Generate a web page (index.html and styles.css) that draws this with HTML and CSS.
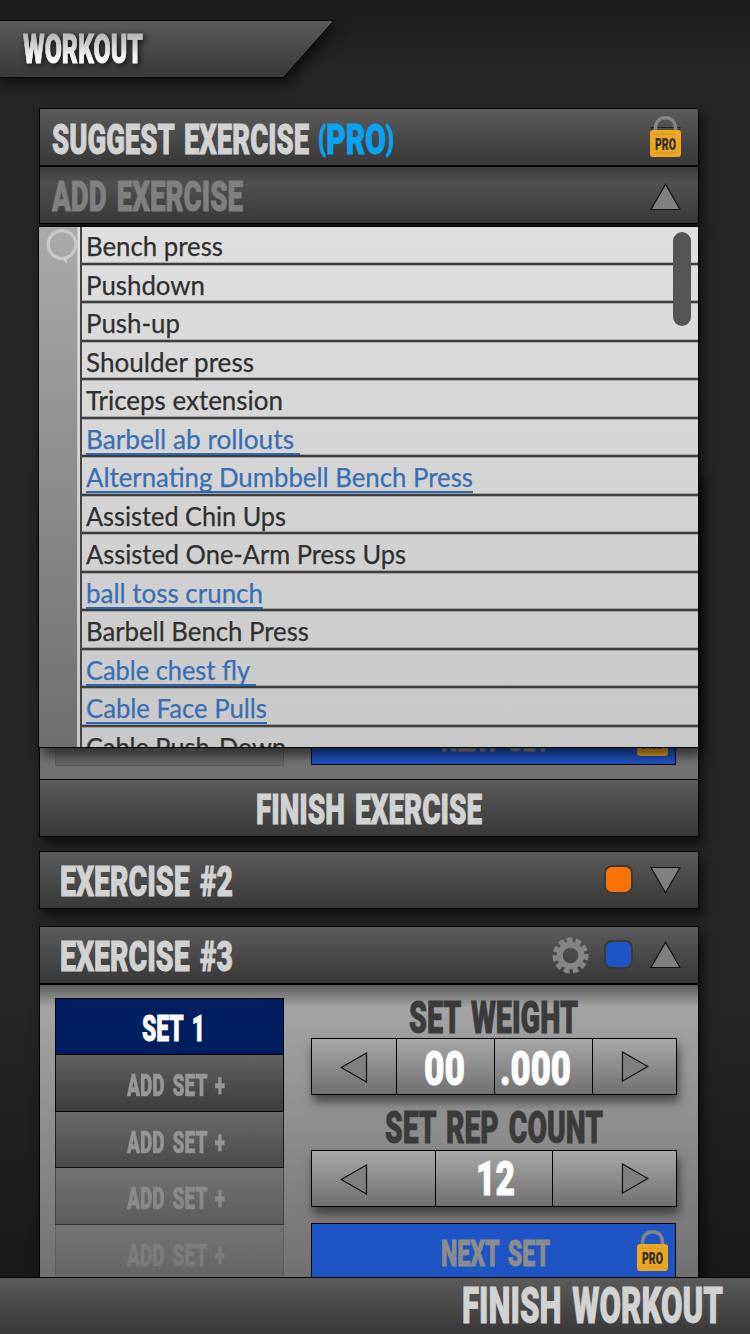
FILE: index.html
```html
<!DOCTYPE html>
<html lang="en">
<head>
<meta charset="utf-8">
<title>Workout</title>
<link rel="stylesheet" href="styles.css">
</head>
<body>
<svg class="defs" width="0" height="0" aria-hidden="true">
  <defs>
    <linearGradient id="barFill" x1="0" y1="0" x2="0" y2="1"><stop offset="0" stop-color="#5b5b5b"/><stop offset="1" stop-color="#383838"/></linearGradient>
    <linearGradient id="titleFill" x1="0" y1="0" x2="0" y2="1"><stop offset="0.2" stop-color="#b8b8b8"/><stop offset="0.75" stop-color="#ffffff"/></linearGradient>
    <symbol id="up" viewBox="0 0 31 28"><path d="M15.5 1.2 30 26.5H1Z"/></symbol>
    <symbol id="down" viewBox="0 0 31 28"><path d="M15.5 26.8 30 1.5H1Z"/></symbol>
    <symbol id="left" viewBox="0 0 28 31"><path d="M1.2 15.5 26.5 1V30Z"/></symbol>
    <symbol id="right" viewBox="0 0 28 31"><path d="M26.8 15.5 1.5 1V30Z"/></symbol>
    <symbol id="lock" viewBox="0 0 31 41">
      <path d="M5.5 15V12C5.5 5.5 10 1.8 15.5 1.8S25.500 5.500 25.500 12V15" fill="none" stroke="#858585" stroke-width="3.4"/>
      <rect y="14" width="31" height="27" rx="3" fill="#eca620"/>
      <path d="M4 18.300H27M4 36.800H27" stroke="#cf9a36" stroke-width="1"/>
    </symbol>
  </defs>
</svg>
<div class="screen">
  <header class="tab">
    <svg class="tab-shape" width="336" height="58"><path d="M-2 .5H334L283.500 57.500H-2Z" fill="url(#barFill)" stroke="#000"/></svg>
    <h1><svg class="cap title" width="120" height="29"><text y="29" textLength="120" lengthAdjust="spacingAndGlyphs">WORKOUT</text></svg></h1>
  </header>

  <main>
    <section class="picker">
      <div class="bar suggest">
        <svg class="cap" width="258" height="31"><text y="31" textLength="257" lengthAdjust="spacingAndGlyphs">SUGGEST EXERCISE</text></svg>
        <svg class="cap pro" width="77" height="31"><text y="31" textLength="76" lengthAdjust="spacingAndGlyphs"><tspan class="paren" dy="-4.500">(</tspan><tspan dy="4.500">PRO</tspan><tspan class="paren" dy="-4.500">)</tspan></text></svg>
        <svg class="end lock-icon" width="31" height="41"><path d="M.5 11.500H30.500M1 12 4 17M30 12 27 17" stroke="#222" fill="none"/><use href="#lock"/><text x="5" y="33.600" textLength="21" lengthAdjust="spacingAndGlyphs">PRO</text></svg>
      </div>
      <div class="bar add">
        <svg class="cap" width="192" height="31"><text y="31" textLength="191" lengthAdjust="spacingAndGlyphs">ADD EXERCISE</text></svg>
        <svg class="end tri tri-low" width="31" height="28"><use href="#up"/></svg>
      </div>
      <div class="dropdown">
        <div class="gutter"><svg width="34" height="36"><path d="M15 1.700A13.800 13.800 0 1 1 15 29.300A13.800 13.800 0 1 1 15 1.700Z" fill="none" stroke="#c9c9c9" stroke-width="3.200"/><path d="M14.500 29 20 35V28Z" fill="#c9c9c9"/></svg></div>
        <ul>
          <li><svg class="row-text" width="137" height="28"><text y="28" textLength="137" lengthAdjust="spacingAndGlyphs">Bench press</text></svg></li>
          <li><svg class="row-text" width="119" height="28"><text y="28" textLength="119" lengthAdjust="spacingAndGlyphs">Pushdown</text></svg></li>
          <li><svg class="row-text" width="94" height="28"><text y="28" textLength="94" lengthAdjust="spacingAndGlyphs">Push-up</text></svg></li>
          <li><svg class="row-text" width="168" height="28"><text y="28" textLength="168" lengthAdjust="spacingAndGlyphs">Shoulder press</text></svg></li>
          <li><svg class="row-text" width="197" height="28"><text y="28" textLength="197" lengthAdjust="spacingAndGlyphs">Triceps extension</text></svg></li>
          <li><a class="trail"><svg class="row-text" width="208" height="28"><text y="28" textLength="208" lengthAdjust="spacingAndGlyphs">Barbell ab rollouts</text></svg></a></li>
          <li><a><svg class="row-text" width="387" height="28"><text y="28" textLength="387" lengthAdjust="spacingAndGlyphs">Alternating Dumbbell Bench Press</text></svg></a></li>
          <li><svg class="row-text" width="200" height="28"><text y="28" textLength="200" lengthAdjust="spacingAndGlyphs">Assisted Chin Ups</text></svg></li>
          <li><svg class="row-text" width="320" height="28"><text y="28" textLength="320" lengthAdjust="spacingAndGlyphs">Assisted One-Arm Press Ups</text></svg></li>
          <li><a><svg class="row-text" width="177" height="28"><text y="28" textLength="177" lengthAdjust="spacingAndGlyphs">ball toss crunch</text></svg></a></li>
          <li><svg class="row-text" width="223" height="28"><text y="28" textLength="223" lengthAdjust="spacingAndGlyphs">Barbell Bench Press</text></svg></li>
          <li><a class="trail"><svg class="row-text" width="164" height="28"><text y="28" textLength="164" lengthAdjust="spacingAndGlyphs">Cable chest fly</text></svg></a></li>
          <li><a><svg class="row-text" width="181" height="28"><text y="28" textLength="181" lengthAdjust="spacingAndGlyphs">Cable Face Pulls</text></svg></a></li>
          <li><svg class="row-text" width="200" height="28"><text y="28" textLength="200" lengthAdjust="spacingAndGlyphs">Cable Push-Down</text></svg></li>
        </ul>
        <div class="scrollbar"></div>
      </div>
    </section>

    <section class="card first">
      <div class="body">
        <div class="sets"><div class="set f4"><svg class="cap s22" width="98" height="22"><text y="22" textLength="98" lengthAdjust="spacingAndGlyphs">ADD SET +</text></svg></div></div>
        <div class="controls">
          <div class="next">
            <svg class="cap s27" width="110" height="27"><text y="27" textLength="109" lengthAdjust="spacingAndGlyphs">NEXT SET</text></svg>
            <svg class="lock-icon" width="31" height="41"><use href="#lock"/><text x="5" y="33.600" textLength="21" lengthAdjust="spacingAndGlyphs">PRO</text></svg>
          </div>
        </div>
      </div>
      <div class="bar finish"><svg class="cap" width="227" height="31"><text y="31" textLength="226" lengthAdjust="spacingAndGlyphs">FINISH EXERCISE</text></svg></div>
    </section>

    <section class="card second">
      <div class="bar named">
        <svg class="cap" width="174" height="31"><text y="31" textLength="173" lengthAdjust="spacingAndGlyphs">EXERCISE #2</text></svg>
        <i class="end swatch orange"></i>
        <svg class="tri" width="31" height="28"><use href="#down"/></svg>
      </div>
    </section>

    <section class="card third">
      <div class="bar named">
        <svg class="cap" width="174" height="31"><text y="31" textLength="173" lengthAdjust="spacingAndGlyphs">EXERCISE #3</text></svg>
        <svg class="end gear" width="37" height="37" viewBox="-18.500 -18.500 37 37"><g fill="none" stroke="#858585" transform="rotate(-104)"><circle r="10.800" stroke-width="6"/><circle r="15.400" stroke-width="5.200" stroke-dasharray="5.700 3.097"/></g></svg>
        <i class="swatch blue"></i>
        <svg class="tri" width="31" height="28"><use href="#up"/></svg>
      </div>
      <div class="body">
        <div class="sets">
          <div class="set current"><svg class="cap s27" width="63" height="27"><text y="27" textLength="63" lengthAdjust="spacingAndGlyphs">SET 1</text></svg></div>
          <div class="set f1"><svg class="cap s22" width="98" height="22"><text y="22" textLength="98" lengthAdjust="spacingAndGlyphs">ADD SET +</text></svg></div>
          <div class="set f2"><svg class="cap s22" width="98" height="22"><text y="22" textLength="98" lengthAdjust="spacingAndGlyphs">ADD SET +</text></svg></div>
          <div class="set f3"><svg class="cap s22" width="98" height="22"><text y="22" textLength="98" lengthAdjust="spacingAndGlyphs">ADD SET +</text></svg></div>
          <div class="set f4"><svg class="cap s22" width="98" height="22"><text y="22" textLength="98" lengthAdjust="spacingAndGlyphs">ADD SET +</text></svg></div>
        </div>
        <div class="controls">
          <svg class="cap label" width="170" height="33"><text y="33" textLength="169" lengthAdjust="spacingAndGlyphs">SET WEIGHT</text></svg>
          <div class="stepper weight">
            <span><svg class="tri" width="28" height="31"><use href="#left"/></svg></span>
            <span><svg class="cap num" width="41" height="35"><text y="35" textLength="41" lengthAdjust="spacingAndGlyphs">00</text></svg></span>
            <span><svg class="cap num" width="71" height="35"><text y="35" textLength="71" lengthAdjust="spacingAndGlyphs">.000</text></svg></span>
            <span><svg class="tri" width="28" height="31"><use href="#right"/></svg></span>
          </div>
          <svg class="cap label" width="219" height="33"><text y="33" textLength="218" lengthAdjust="spacingAndGlyphs">SET REP COUNT</text></svg>
          <div class="stepper reps">
            <span><svg class="tri" width="28" height="31"><use href="#left"/></svg></span>
            <span><svg class="cap num" width="39" height="35"><text y="35" textLength="39" lengthAdjust="spacingAndGlyphs">12</text></svg></span>
            <span><svg class="tri" width="28" height="31"><use href="#right"/></svg></span>
          </div>
          <div class="next">
            <svg class="cap s27" width="110" height="27"><text y="27" textLength="109" lengthAdjust="spacingAndGlyphs">NEXT SET</text></svg>
            <svg class="lock-icon" width="31" height="41"><use href="#lock"/><text x="5" y="33.600" textLength="21" lengthAdjust="spacingAndGlyphs">PRO</text></svg>
          </div>
        </div>
      </div>
    </section>
  </main>

  <footer><svg class="cap s36" width="261" height="36"><text y="36" textLength="261" lengthAdjust="spacingAndGlyphs">FINISH WORKOUT</text></svg></footer>
</div>
</body>
</html>
```

FILE: styles.css
```css
* { box-sizing: border-box; }
body { margin: 0; background: #252525; font-family: Roboto, sans-serif; }
h1, ul { margin: 0; padding: 0; }
svg { display: block; flex: none; overflow: visible; }
.defs { position: absolute; }

.screen {
  display: flex;
  flex-direction: column;
  width: 750px;
  height: 1334px;
  overflow: hidden;
  background: linear-gradient(#1b1b1b 0, #252525 65px, #252525 1000px, #181818 1277px);
}

/* Condensed capitals: the box is as tall as the letters */
.cap text {
  font-family: Roboto, sans-serif;
  font-weight: 900;
  font-size: 42.500px;
  word-spacing: 5px;
  fill: #d2d2d2;
  stroke: #d2d2d2;
  stroke-width: .9px;
}
.cap.s22 text { font-size: 30.500px; fill: #989898; stroke: #989898; stroke-width: .5px; }
.cap.s27 text { font-size: 37.500px; }
.cap.s36 text { font-size: 50px; }
.cap.label text { font-size: 45px; fill: #3b3b3b; stroke: #3b3b3b; }
.cap.num text { font-size: 48.500px; fill: #fff; stroke: #fff; }
.cap.title text { font-size: 40px; fill: url(#titleFill); stroke: url(#titleFill); }

.tab { display: grid; margin-top: 20px; height: 58px; }
.tab > * { grid-area: 1 / 1; }
.tab-shape { filter: drop-shadow(4px 7px 6px rgba(0,0,0,.55)); }
.tab h1 { padding: 14px 0 0 23px; z-index: 1; }
.title { filter: drop-shadow(2px 2px 3px rgba(0,0,0,.75)); }

main {
  flex: 1;
  min-height: 0;
  width: 660px;
  margin: 30px 0 0 39px;
}

.bar {
  display: flex;
  align-items: flex-start;
  height: 58px;
  padding: 13px 17px 0 12px;
  border: 1px solid #000;
  background: linear-gradient(#5b5b5b, #383838);
}
.bar .end { margin-left: auto; }
.tri { fill: #808080; stroke: #111; stroke-width: 1.200; }

.picker { position: relative; height: 116px; z-index: 2; box-shadow: 4px 6px 10px rgba(0,0,0,.55); }
.suggest { padding-top: 14px; }
.suggest .pro { margin-left: 8px; }
.cap.pro text { fill: #08a3f0; stroke: #08a3f0; }
.paren { font-size: 33px; }
.suggest .lock-icon { margin-top: -7px; }
.add {
  background: linear-gradient(rgba(0,0,0,.35), transparent 17px), linear-gradient(#5b5b5b, #383838);
}
.add .cap text { fill: #808080; stroke: #808080; }
.tri-low { margin-top: 3px; }
.lock-icon text { font-family: Roboto, sans-serif; font-weight: 900; font-size: 17px; fill: #2b2b2b; }

.dropdown {
  position: absolute;
  left: -1px;
  top: 118px;
  display: flex;
  width: 661px;
  height: 522px;
  overflow: hidden;
  border: 1px solid #000;
  background: linear-gradient(#dfdfdf, #c8c8c8);
}
.picker::after {
  content: "";
  position: absolute;
  z-index: -1;
  left: -1px;
  top: 118px;
  width: 661px;
  height: 522px;
  box-shadow: 4px 8px 10px rgba(0,0,0,.55);
}
.gutter {
  width: 39px;
  padding: 2px 0 0 8px;
  overflow: hidden;
  border-right: 1px solid #c4c4c4;
  background: linear-gradient(#aaa, #6e6e6e);
}
.dropdown ul { flex: 1; margin-left: 2px; border-left: 2px solid #444; list-style: none; }
.dropdown li {
  height: 38.540px;
  padding: 1px 0 0 4px;
  border-bottom: 2px solid #3e3e3e;
  box-shadow: 0 1px 0 rgba(0,0,0,.22), inset 0 -1px 0 rgba(0,0,0,.22);
}
.dropdown li:first-child { height: 37.540px; padding-top: 0; }
.row-text text { font-family: Lato, sans-serif; font-size: 26.500px; fill: #303030; stroke: #303030; stroke-width: .25px; transform: translateY(.6px); }
.dropdown a { display: block; width: fit-content; height: 35px; border-bottom: 2px solid #2f68b0; }
.dropdown a.trail { padding-right: 6px; }
.dropdown a text { fill: #386fb4; stroke: #386fb4; }
.scrollbar {
  position: absolute;
  right: 7px;
  top: 5px;
  width: 18px;
  height: 94px;
  border-radius: 9px;
  background: #555;
}

.card { box-shadow: 4px 7px 10px rgba(0,0,0,.6); }
.body {
  display: flex;
  gap: 27px;
  padding: 14px 0 0 15px;
  border: 1px solid #000;
}
.first { margin-top: 246px; height: 367px; }
.first .body { height: 309px; padding-top: 237px; border-bottom: 0; background: linear-gradient(#a8a8a8, #707070); }
.first .sets { padding-top: 1px; }
.finish { justify-content: center; padding: 13px 0 0; }
.second { margin-top: 14px; }
.third { margin-top: 17px; }
.named { padding-left: 20px; }
.named .tri { margin: 1px 0 0 17px; }
.swatch { width: 29px; height: 29px; border: 2px solid #3a3a3a; border-radius: 8px; }
.orange { background: #f97306; }
.blue { background: #1f54c5; margin-left: 15px; }
.gear { margin-top: -3px; }
.third .body {
  height: 309px;
  padding-top: 13px;
  background: linear-gradient(rgba(0,0,0,.45), transparent 22px), linear-gradient(#a8a8a8, #6e6e6e);
}

.sets { width: 229px; }
.set {
  display: flex;
  justify-content: center;
  height: 57.400px;
  margin-bottom: -1px;
  padding: 19px 0 0 13px;
  border: 1px solid #000;
  background: linear-gradient(#5e5e5e, #393939);
}
.current { padding: 15px 0 0 8px; background: #001e60; }
.current .cap.s27 text { fill: #fff; stroke: #fff; }
.f1 { opacity: .95; }
.f2 { opacity: .76; }
.f3 { opacity: .45; }
.f4 { opacity: .2; }

.controls { display: flex; flex-direction: column; align-items: center; width: 366px; }
.label { margin: 2px 0 5px; }
.stepper {
  display: grid;
  width: 366px;
  height: 57px;
  border: 1px solid #000;
  background: linear-gradient(#a8a8a8, #707070);
  box-shadow: 2px 7px 9px rgba(0,0,0,.5);
}
.weight { grid-template-columns: 85px 98px 98px 1fr; margin-bottom: 13px; }
.reps { grid-template-columns: 124px 117px 1fr; margin-bottom: 16px; }
.reps { margin-top: 2px; }
.stepper span { display: flex; justify-content: flex-start; padding-top: 12px; border-right: 1px solid #000; }
.stepper span:first-child { padding: 13px 0 0 28px; }
.stepper span:last-child { justify-content: flex-end; padding-right: 27px; border-right: 0; }
.stepper .num { margin: -1px 0 0 27px; }
.weight span:nth-child(3) .num { margin-left: 5px; }
.reps .num { margin: -3px 0 0 40px; }
.next {
  display: flex;
  width: 365px;
  height: 57px;
  margin-right: 1px;
  padding: 15px 7px 0 129px;
  justify-content: space-between;
  border: 1px solid #000;
  background: #1f54c5;
}
.next .cap text { fill: #8c8c8c; stroke: #8c8c8c; }
.next .lock-icon { margin-top: -9px; }

footer {
  position: relative;
  z-index: 3;
  flex: none;
  display: flex;
  justify-content: flex-end;
  height: 57px;
  padding: 9px 27px 0 0;
  border-top: 1px solid #000;
  background: linear-gradient(#5b5b5b, #383838);
}
```
